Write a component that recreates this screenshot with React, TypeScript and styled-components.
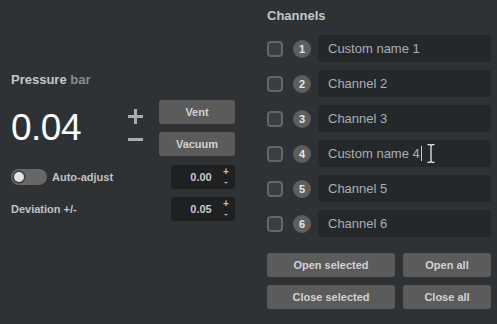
import * as React from 'react';
import styled, { createGlobalStyle } from 'styled-components';

const GlobalStyle = createGlobalStyle`
  html, body {
    margin: 0;
    padding: 0;
    background: #2e3235;
  }
  body {
    font-family: "Liberation Sans", Arial, sans-serif;
    width: 497px;
    height: 324px;
    overflow: hidden;
  }
`;

const Page = styled.div`
  display: flex;
  width: 497px;
  height: 324px;
  background: #2e3235;
`;

const LeftPanel = styled.div`
  width: 224px;
  padding: 72px 12px 0 11px;
  display: flex;
  flex-direction: column;
`;

const RightPanel = styled.div`
  flex: 1;
  padding: 8px 6px 0 20px;
  display: flex;
  flex-direction: column;
`;

const Heading = styled.div`
  font-size: 13px;
  font-weight: 700;
  line-height: 16px;
  color: #c6c6c6;
`;

const Unit = styled.span`
  color: #8b8b8b;
`;

const ReadoutRow = styled.div`
  display: flex;
  align-items: center;
  margin-top: 12px;
`;

const BigValue = styled.div`
  font-size: 37px;
  line-height: 56px;
  color: #ffffff;
  width: 116px;
  letter-spacing: -0.5px;
`;

const Signs = styled.div`
  display: flex;
  flex-direction: column;
  align-items: center;
  gap: 8px;
  width: 16px;
  margin-right: 16px;
`;

const ButtonStack = styled.div`
  display: flex;
  flex-direction: column;
  gap: 8px;
`;

const Button = styled.button<{ $width?: number }>`
  width: ${(p) => (p.$width ? `${p.$width}px` : '100%')};
  height: 24px;
  border: none;
  border-radius: 3px;
  background: #5b5b5b;
  color: #d2d2d2;
  font-family: "Liberation Sans", Arial, sans-serif;
  font-size: 11px;
  font-weight: 700;
  padding: 0;
`;

const SettingRow = styled.div<{ $top: number }>`
  display: flex;
  align-items: center;
  justify-content: space-between;
  margin-top: ${(p) => p.$top}px;
  height: 24px;
`;

const LabelGroup = styled.div`
  display: flex;
  align-items: center;
  gap: 5px;
`;

const Label = styled.span`
  font-size: 11px;
  font-weight: 700;
  color: #c2c2c2;
`;

const Toggle = styled.div`
  width: 36px;
  height: 16px;
  border-radius: 8px;
  background: #676767;
  display: flex;
  align-items: center;
  padding-left: 3px;
  box-sizing: border-box;
`;

const Knob = styled.div`
  width: 10px;
  height: 10px;
  border-radius: 50%;
  background: #e2e2e2;
  box-shadow: 0 0 0 1.5px #3c3c3c;
`;

const NumberBox = styled.div`
  width: 64px;
  height: 24px;
  border-radius: 3px;
  background: #1f2022;
  display: flex;
  align-items: center;
  box-sizing: border-box;
  padding-right: 4px;
`;

const NumberValue = styled.span`
  flex: 1;
  text-align: center;
  padding-left: 10px;
  font-size: 11px;
  font-weight: 700;
  color: #c9c9c9;
`;

const Stepper = styled.div`
  display: flex;
  flex-direction: column;
  align-items: center;
  font-size: 10px;
  font-weight: 700;
  line-height: 10px;
  color: #bdbdbd;
  width: 10px;
`;

const ChannelList = styled.div`
  display: flex;
  flex-direction: column;
  gap: 8px;
  margin-top: 11px;
`;

const ChannelRow = styled.div`
  display: flex;
  align-items: center;
  height: 27px;
`;

const Checkbox = styled.div`
  width: 16px;
  height: 16px;
  box-sizing: border-box;
  border: 2px solid #666666;
  border-radius: 4px;
  background: #3b3e41;
  margin-right: 10px;
`;

const Badge = styled.div`
  width: 18px;
  height: 18px;
  border-radius: 50%;
  background: #5e5e5e;
  color: #e6e6e6;
  font-size: 11px;
  font-weight: 700;
  display: flex;
  align-items: center;
  justify-content: center;
  margin-right: 7px;
`;

const NameField = styled.div`
  position: relative;
  flex: 1;
  height: 27px;
  border-radius: 3px;
  background: #25282a;
  display: flex;
  align-items: center;
  padding-left: 10px;
  font-size: 13px;
  color: #a9afb4;
`;

const Caret = styled.span`
  display: inline-block;
  width: 1px;
  height: 15px;
  background: #c8c8c8;
  margin-left: 1px;
`;

const Pointer = styled.svg`
  position: absolute;
  left: 109px;
  top: 4px;
`;

const ActionGrid = styled.div`
  display: grid;
  grid-template-columns: 128px 88px;
  gap: 8px;
  margin-top: 16px;
`;

const PlusIcon = () => (
  <svg width="15" height="15" viewBox="0 0 15 15">
    <rect x="0" y="6" width="15" height="3" fill="#ababab" />
    <rect x="6" y="0" width="3" height="15" fill="#ababab" />
  </svg>
);

const MinusIcon = () => (
  <svg width="15" height="15" viewBox="0 0 15 15">
    <rect x="0" y="6" width="15" height="3" fill="#ababab" />
  </svg>
);

const channels = ['Custom name 1', 'Channel 2', 'Channel 3', 'Custom name 4', 'Channel 5', 'Channel 6'];

const App: React.FC = () => {
  return (
    <Page>
      <GlobalStyle />
      <LeftPanel>
        <Heading>
          Pressure <Unit>bar</Unit>
        </Heading>
        <ReadoutRow>
          <BigValue>0.04</BigValue>
          <Signs>
            <PlusIcon />
            <MinusIcon />
          </Signs>
          <ButtonStack>
            <Button $width={76}>Vent</Button>
            <Button $width={76}>Vacuum</Button>
          </ButtonStack>
        </ReadoutRow>
        <SettingRow $top={9}>
          <LabelGroup>
            <Toggle>
              <Knob />
            </Toggle>
            <Label>Auto-adjust</Label>
          </LabelGroup>
          <NumberBox>
            <NumberValue>0.00</NumberValue>
            <Stepper>
              <span>+</span>
              <span>-</span>
            </Stepper>
          </NumberBox>
        </SettingRow>
        <SettingRow $top={8}>
          <Label>Deviation +/-</Label>
          <NumberBox>
            <NumberValue>0.05</NumberValue>
            <Stepper>
              <span>+</span>
              <span>-</span>
            </Stepper>
          </NumberBox>
        </SettingRow>
      </LeftPanel>
      <RightPanel>
        <Heading>Channels</Heading>
        <ChannelList>
          {channels.map((name, i) => (
            <ChannelRow key={i}>
              <Checkbox />
              <Badge>{i + 1}</Badge>
              <NameField>
                {name}
                {i === 3 && (
                  <>
                    <Caret />
                    <Pointer width="8" height="19" viewBox="0 0 8 19">
                      <path d="M0.5 0.7 H3 L4 1.7 L5 0.7 H7.5 M4 1.7 V17.3 M0.5 18.3 H3 L4 17.3 L5 18.3 H7.5" stroke="#e8e8e8" strokeWidth="1.3" fill="none" />
                    </Pointer>
                  </>
                )}
              </NameField>
            </ChannelRow>
          ))}
        </ChannelList>
        <ActionGrid>
          <Button>Open selected</Button>
          <Button>Open all</Button>
          <Button>Close selected</Button>
          <Button>Close all</Button>
        </ActionGrid>
      </RightPanel>
    </Page>
  );
};

export default App;
